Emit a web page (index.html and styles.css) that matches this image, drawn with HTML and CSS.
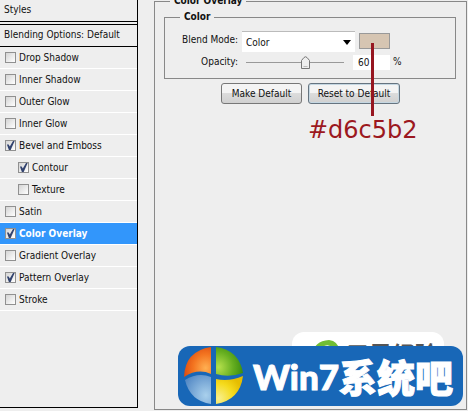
FILE: index.html
```html
<!DOCTYPE html>
<html lang="en">
<head>
<meta charset="utf-8">
<title>Layer Style</title>
<link rel="stylesheet" href="styles.css">
</head>
<body>
<main class="dialog">
  <nav class="styles">
    <div class="styles-title">Styles</div>
    <div class="styles-blending">Blending Options: Default</div>
    <ul class="effects">
      <li><label class="effect"><input type="checkbox">Drop Shadow</label></li>
      <li><label class="effect"><input type="checkbox">Inner Shadow</label></li>
      <li><label class="effect"><input type="checkbox">Outer Glow</label></li>
      <li><label class="effect"><input type="checkbox">Inner Glow</label></li>
      <li><label class="effect"><input type="checkbox" checked>Bevel and Emboss</label></li>
      <li><label class="effect nested"><input type="checkbox" checked>Contour</label></li>
      <li><label class="effect nested"><input type="checkbox">Texture</label></li>
      <li><label class="effect"><input type="checkbox">Satin</label></li>
      <li><label class="effect selected"><input type="checkbox" checked>Color Overlay</label></li>
      <li><label class="effect"><input type="checkbox">Gradient Overlay</label></li>
      <li><label class="effect"><input type="checkbox" checked>Pattern Overlay</label></li>
      <li><label class="effect"><input type="checkbox">Stroke</label></li>
    </ul>
  </nav>
  <fieldset class="panel">
    <legend>Color Overlay</legend>
    <fieldset class="group">
      <legend>Color</legend>
      <div class="row row-blend">
        <label class="name" for="blend">Blend Mode:</label>
        <div class="picker">
          <select id="blend"><option>Color</option></select>
          <svg class="arrow" viewBox="0 0 8 5" aria-hidden="true"><path d="M0 0h8L4 5z"/></svg>
        </div>
        <button class="swatch" type="button" aria-label="Overlay color"></button>
      </div>
      <div class="row row-opacity">
        <label class="name" for="opacity">Opacity:</label>
        <div class="slider">
          <input id="opacity" type="range" min="0" max="100" value="60">
          <svg class="thumb" viewBox="0 0 9 13" aria-hidden="true"><path d="M.5 12.500V4.500L3 1.500Q4.500 0 6 1.500L8.500 4.500V12.500Z" fill="#eee" stroke="#777"/><path d="M2.500 10.500h4" stroke="#bbb"/></svg>
        </div>
        <input class="amount" type="text" value="60" aria-label="Opacity percent">
        <span>%</span>
      </div>
    </fieldset>
    <div class="actions">
      <button class="action" type="button">Make Default</button>
      <button class="action reset" type="button">Reset to Default</button>
    </div>
  </fieldset>
</main>
<div class="pointer"></div>
<div class="callout">#d6c5b2</div>
<div class="site-tag">
  <svg viewBox="0 0 30 30" aria-hidden="true"><path d="M0 16Q2 2 17 1Q26 2 28 12L20 9Q17 4 10 8Q4 10 0 16Z" fill="#70bd35"/><path d="M3 20Q8 9 20 7L28 12Q20 13 15 24Z" fill="#b9df93"/></svg>
  <span>三黑经验</span>
</div>
<div class="brand">
  <svg viewBox="0 0 60 60" aria-hidden="true">
    <defs>
      <radialGradient id="red" cx=".8" cy=".7" r=".9"><stop offset="0" stop-color="#ffb052"/><stop offset=".5" stop-color="#f47621"/><stop offset="1" stop-color="#d9430c"/></radialGradient>
      <radialGradient id="green" cx=".1" cy=".7" r=".9"><stop offset="0" stop-color="#b5e04c"/><stop offset=".6" stop-color="#65ae20"/><stop offset="1" stop-color="#3c8d10"/></radialGradient>
      <radialGradient id="blue" cx=".8" cy=".7" r=".9"><stop offset="0" stop-color="#a9d0ec"/><stop offset="1" stop-color="#5489c5"/></radialGradient>
      <radialGradient id="gold" cx=".1" cy=".8" r=".9"><stop offset="0" stop-color="#f7ef8e"/><stop offset=".6" stop-color="#f5db1d"/><stop offset="1" stop-color="#e6bd00"/></radialGradient>
    </defs>
    <path d="M27 1V28Q14 22 0 31Q1 5 27 1Z" fill="url(#red)"/>
    <path d="M32 1Q55 4 59 27Q45 32 32 28Z" fill="url(#green)"/>
    <path d="M1 34Q14 26 27 31V58Q6 55 1 34Z" fill="url(#blue)"/>
    <path d="M32 33Q45 36 59 30Q56 54 32 58Z" fill="url(#gold)"/>
  </svg>
  <span class="brand-name">Win7<span class="brand-cjk">系统吧</span></span>
</div>
</body>
</html>
```
FILE: styles.css
```css
* { box-sizing: border-box; }
body {
  margin: 0;
  position: relative;
  min-height: 100vh;
  overflow: hidden;
  background: #eee;
  color: #111;
  font: 10px/14px "DejaVu Sans Condensed", "DejaVu Sans", sans-serif;
}
input, select, button { font: inherit; color: inherit; margin: 0; }
.dialog {
  display: grid;
  grid-template-columns: 138px 1fr;
  column-gap: 16px;
  height: 100vh;
  padding-right: 1px;
}
.styles {
  margin-bottom: 3px;
  border-right: 1px solid #000;
  border-bottom: 1px solid #000;
}
.styles-title {
  height: 25px;
  padding: 3px 4px;
  border-bottom: 4px double #000;
}
.styles-blending {
  height: 22px;
  padding: 3px 4px;
  border-bottom: 1px solid #000;
}
.effects { list-style: none; margin: 0; padding: 0; }
.effect {
  display: flex;
  align-items: center;
  gap: 3px;
  height: 22px;
  padding-left: 5px;
  border-bottom: 1px solid #fff;
}
.nested { padding-left: 18px; }
.selected { background: #3296fb; color: #fff; font-weight: bold; }
.effect input {
  appearance: none;
  width: 11px;
  height: 11px;
  border: 1px solid #909090;
  background: linear-gradient(135deg, #d4d4d4, #fff);
}
.effect input:checked::before {
  content: "";
  display: block;
  height: 9px;
  background: #32436f;
  clip-path: polygon(10% 40%, 30% 40%, 42% 62%, 78% 0, 96% 0, 52% 100%, 32% 100%);
}
fieldset { min-width: 0; margin: 0; padding: 0; border: 1px solid #888; }
legend { font-weight: bold; }
.panel { margin: -6px 0 1px; }
.panel > legend { margin-left: 15px; padding: 0 4px; }
.group { margin: 2px 10px 0 9px; height: 69px; }
.group > legend { margin-left: 15px; padding: 0 4px; }
.row { display: flex; }
.name { width: 73px; text-align: right; }
.row-blend { height: 24px; }
.row-blend .name { padding-top: 9px; }
.picker { position: relative; width: 113px; height: 21px; margin: 7px 4px 0 4px; }
.picker select {
  appearance: none;
  width: 100%;
  height: 100%;
  padding: 2px 4px 0;
  border: 0;
  border-top: 1px solid #bbb;
  border-radius: 0;
  background: #fff;
}
.arrow { position: absolute; right: 4px; top: 9px; width: 8px; height: 5px; }
.swatch {
  width: 31px;
  height: 16px;
  margin-top: 9px;
  border: 1px solid #999;
  background: #d6c5b2;
}
.row-opacity { height: 24px; padding-top: 7px; }
.slider { position: relative; width: 98px; height: 14px; margin: 0 9px 0 8px; }
.slider input {
  appearance: none;
  display: block;
  width: 100%;
  height: 14px;
  background: linear-gradient(#999, #999) center / 100% 1px no-repeat;
}
.slider input::-webkit-slider-thumb { appearance: none; width: 9px; height: 13px; opacity: 0; }
.thumb { position: absolute; left: 55px; top: 1px; width: 9px; height: 13px; pointer-events: none; }
.amount { width: 37px; height: 15px; margin-right: 3px; padding: 0 5px; border: 0; background: #fff; }
.actions { display: flex; gap: 6px; padding: 4px 0 0 66px; }
.action {
  width: 81px;
  height: 21px;
  padding: 0;
  border: 1px solid #777;
  border-radius: 3px;
  background: linear-gradient(#f4f4f4 50%, #dcdcdc 50%, #d0d0d0);
  white-space: nowrap;
}
.reset { width: 92px; border-color: #667480; box-shadow: inset 0 0 0 1px #c5d7e2; }
.pointer { position: absolute; left: 371px; top: 43px; width: 3px; height: 73px; background: #961620; }
.callout {
  position: absolute;
  left: 308px;
  top: 116px;
  color: #9c1820;
  font: 24px/28px "DejaVu Sans", sans-serif;
}
.site-tag {
  position: absolute;
  left: 292px;
  top: 332px;
  display: flex;
  gap: 4px;
  width: 152px;
  height: 40px;
  padding: 7px 0 0 20px;
  border-radius: 12px;
  background: #fff;
  color: #555;
  font: bold 23px/28px "Noto Sans CJK SC", sans-serif;
  white-space: nowrap;
}
.site-tag svg { width: 30px; height: 30px; flex: none; }
.brand {
  position: absolute;
  left: 178px;
  top: 346px;
  display: flex;
  align-items: center;
  gap: 9px;
  width: 285px;
  height: 60px;
  padding-left: 6px;
  border-radius: 12px;
  background: #1867b7;
  color: #fff;
}
.brand svg { width: 60px; height: 60px; flex: none; }
.brand-name {
  display: flex;
  align-items: center;
  font: 900 35px/40px Lato, sans-serif;
  -webkit-text-stroke: 1px #fff;
  white-space: nowrap;
}
.brand-cjk { font: 900 38px/40px "Noto Sans CJK SC", sans-serif; }
```
